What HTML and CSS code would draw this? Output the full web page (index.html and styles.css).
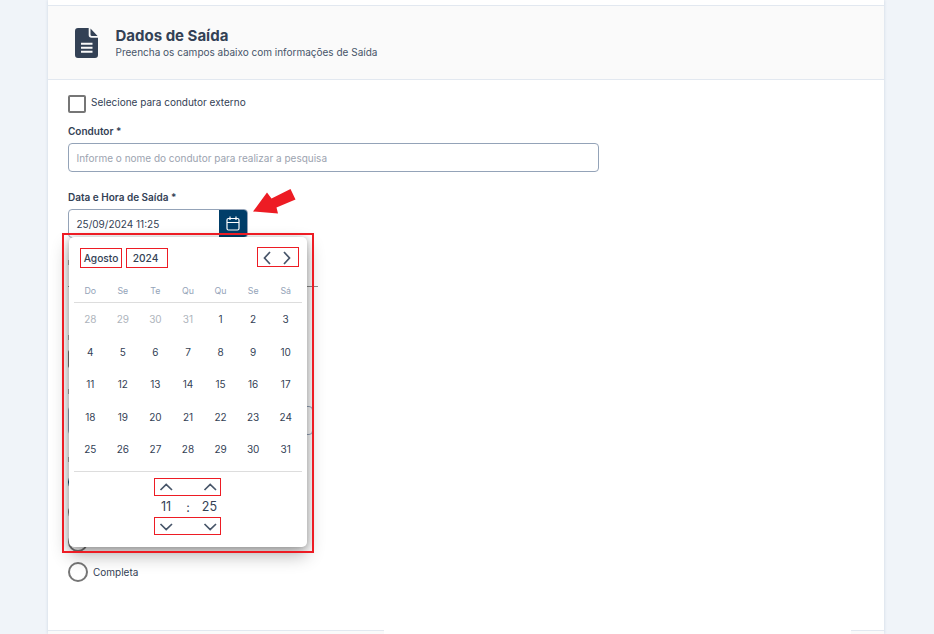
FILE: index.html
```html
<!DOCTYPE html>
<html lang="pt-BR">
<head>
<meta charset="utf-8">
<title>Dados de Saída</title>
<link rel="stylesheet" href="styles.css">
</head>
<body>
<main class="card">
  <header class="head">
    <svg class="doc" width="24" height="31" viewBox="0 0 24 31"><path fill="#334155" d="M3 0H13.700V7Q13.700 9.800 16.500 9.800H23V27Q23 30 20 30H3Q0 30 0 27V3Q0 0 3 0ZM15.500 0.500L22.600 8H17Q15.500 8 15.500 6.500Z"/><path d="M6 15.800H17.500M6 19.800H17.500M6 23.800H17.500" stroke="#fafafa" stroke-width="2"/></svg>
    <div>
      <h1>Dados de Saída</h1>
      <p>Preencha os campos abaixo com informações de Saída</p>
    </div>
  </header>
  <form class="form">
    <label class="check"><span class="box"></span>Selecione para condutor externo</label>
    <div class="label">Condutor *</div>
    <div class="input wide">Informe o nome do condutor para realizar a pesquisa</div>
    <div class="label date-label">Data e Hora de Saída *</div>
    <div class="date">
      <span class="value">25/09/2024 11:25</span>
      <span class="calbtn"><svg width="14" height="15" viewBox="0 0 14 15" fill="none" stroke="#fff" stroke-width="1.200"><rect x="1" y="2.500" width="12" height="11.500" rx="1.500"/><path d="M1 6.500H13M4 0.500V4M10 0.500V4"/></svg></span>
      <div class="popup">
        <div class="bar"><span class="tag month">Agosto</span><span class="tag year">2024</span>
          <span class="tag nav"><svg width="40" height="18" viewBox="0 0 40 18"><path d="M12 4L6.500 10L12 16M26 4L31.500 10L26 16"/></svg></span></div>
        <div class="grid week"><span>Do</span><span>Se</span><span>Te</span><span>Qu</span><span>Qu</span><span>Se</span><span>Sá</span></div>
        <div class="grid days">
          <span class="off">28</span><span class="off">29</span><span class="off">30</span><span class="off">31</span><span>1</span><span>2</span><span>3</span>
          <span>4</span><span>5</span><span>6</span><span>7</span><span>8</span><span>9</span><span>10</span>
          <span>11</span><span>12</span><span>13</span><span>14</span><span>15</span><span>16</span><span>17</span>
          <span>18</span><span>19</span><span>20</span><span>21</span><span>22</span><span>23</span><span>24</span>
          <span>25</span><span>26</span><span>27</span><span>28</span><span>29</span><span>30</span><span>31</span>
        </div>
        <div class="time">
          <span class="tag step"><svg width="65" height="16" viewBox="0 0 65 16"><path d="M5.500 11L11.200 5.500L17 11M49.500 11L55.200 5.500L61 11"/></svg></span>
          <div class="clock"><span>11</span><i>:</i><span>25</span></div>
          <span class="tag step"><svg width="65" height="16" viewBox="0 0 65 16"><path d="M5.500 6L11.200 11.500L17 6M49.500 6L55.200 11.500L61 6"/></svg></span>
        </div>
      </div>
      <div class="frame"></div>
      <svg class="arrow" width="46" height="28" viewBox="0 0 46 28"><path fill="#ed1c24" d="M1 23.500L15 4.500L19.500 10.500L38.500 1L43.500 11.500L24.500 19.500L26 25.500Z"/></svg>
    </div>
    <div class="rest">
      <i class="mark"></i>
      <div class="rule"></div>
      <i class="mark"></i>
      <div class="box hidden-box"></div>
      <i class="mark"></i>
      <div class="input narrow"></div>
      <i class="mark last"></i>
      <div class="radio"><span class="circle on"></span></div>
      <div class="radio"><span class="circle"></span></div>
      <div class="radio"><span class="circle"></span></div>
      <label class="radio"><span class="circle"></span>Completa</label>
    </div>
  </form>
  <footer class="foot"><span></span></footer>
</main>
</body>
</html>
```
FILE: styles.css
```css
* { box-sizing: border-box; }
body { margin: 0; height: 634px; overflow: hidden; background: #f0f4f9; font-family: Inter, sans-serif; font-size: 10px; color: #334155; }
.card { width: 836px; height: 634px; margin-left: 48px; padding-top: 5px; background: #fff; box-shadow: 0 0 3px #cbd5e1; display: flex; flex-direction: column; }
.head { flex: none; height: 75px; background: #fafafa; border-top: 1px solid #e2e8f0; border-bottom: 1px solid #e2e8f0; display: flex; padding: 22px 0 0 27px; }
.doc { margin-right: 16.500px; }
h1 { margin: 0; font-size: 15px; line-height: 16px; font-weight: 700; }
p { margin: 0; line-height: 17px; color: #475569; }
.form { flex: 1; padding: 14px 20px 0; min-height: 0; }
.check { display: flex; height: 20px; line-height: 17px; gap: 5px; }
.box { width: 18px; height: 18px; border: 2px solid #767676; border-radius: 2px; margin-top: 1px; }
.label { height: 15px; line-height: 15px; margin-top: 10px; font-weight: 600; }
.input { height: 29px; border: 1px solid #94a3b8; border-radius: 4px; }
.wide { width: 531px; margin-top: 4px; padding-left: 7.500px; line-height: 29px; color: #9ca3af; }
.date-label { margin-top: 18px; }
.date { position: relative; width: 180px; height: 29px; margin-top: 4px; border: 1px solid #94a3b8; border-radius: 4px; display: flex; justify-content: space-between; }
.value { padding-left: 7.500px; line-height: 29px; }
.calbtn { width: 28px; background: #003e69; border-radius: 0 3px 3px 0; display: grid; place-items: center; }
.popup { position: absolute; z-index: 2; left: 0; top: 27px; width: 238px; height: 310px; padding: 10px 5px 0; background: #fff; border-radius: 5px; box-shadow: 0 8px 18px rgba(0,0,0,.3), 0 1px 7px rgba(0,0,0,.25); }
.frame { position: absolute; z-index: 3; left: -7px; top: 23px; width: 252px; height: 320px; border: 2px solid #ed1c24; }
.arrow { position: absolute; left: 182.500px; top: -22.500px; }
.tag { border: 1px solid #ed1c24; text-align: center; display: block; }
.bar { display: flex; padding-left: 6px; height: 22px; font-weight: 500; font-size: 10.200px; line-height: 19px; }
.month { width: 42px; height: 20px; margin: 1px 4px 0 0; }
.year { width: 42px; height: 20px; margin-top: 1px; padding-right: 3px; }
.nav { width: 42px; height: 20px; margin-left: 89px; }
.popup svg { display: block; fill: none; stroke: #475569; stroke-width: 1.700; }
.grid { display: grid; grid-template-columns: repeat(7, 1fr); text-align: center; }
.week { height: 34px; line-height: 44px; font-size: 8.800px; color: #94a3b8; border-bottom: 1px solid #ddd; }
.days { grid-auto-rows: 32.500px; line-height: 33px; height: 169px; border-bottom: 1px solid #ddd; }
.off { color: #aeb4bc; }
.time { width: 67px; margin: 6px 0 0 80px; }
.step { height: 18px; }
.clock { height: 21px; font-size: 12.500px; line-height: 22px; display: flex; justify-content: space-between; }
.clock span { width: 24px; text-align: center; }
.clock span:last-child { width: 23px; }
.clock i { font-style: normal; padding-top: 1px; }
.rest { padding-top: 22px; }
.mark { display: block; width: 3px; height: 5px; background: #aaa; }
.rule { width: 250px; height: 1px; margin: 21px 0 48px; background: #8c8c8c; }
.hidden-box { margin: 10px 0 21px; }
.narrow { width: 245px; margin-top: 12px; }
.last { margin: 22px 0 10px; }
.radio { display: flex; height: 30px; line-height: 21px; gap: 5px; }
.circle { width: 20px; height: 20px; border: 2px solid #767676; border-radius: 50%; }
.on { border-color: #003b63; }
.foot { flex: none; height: 4px; background: #fafafa; border-top: 1px solid #e2e8f0; display: flex; }
.foot span { width: 467px; height: 4px; margin: -1px 0 0 336px; background: #fff; }
```
